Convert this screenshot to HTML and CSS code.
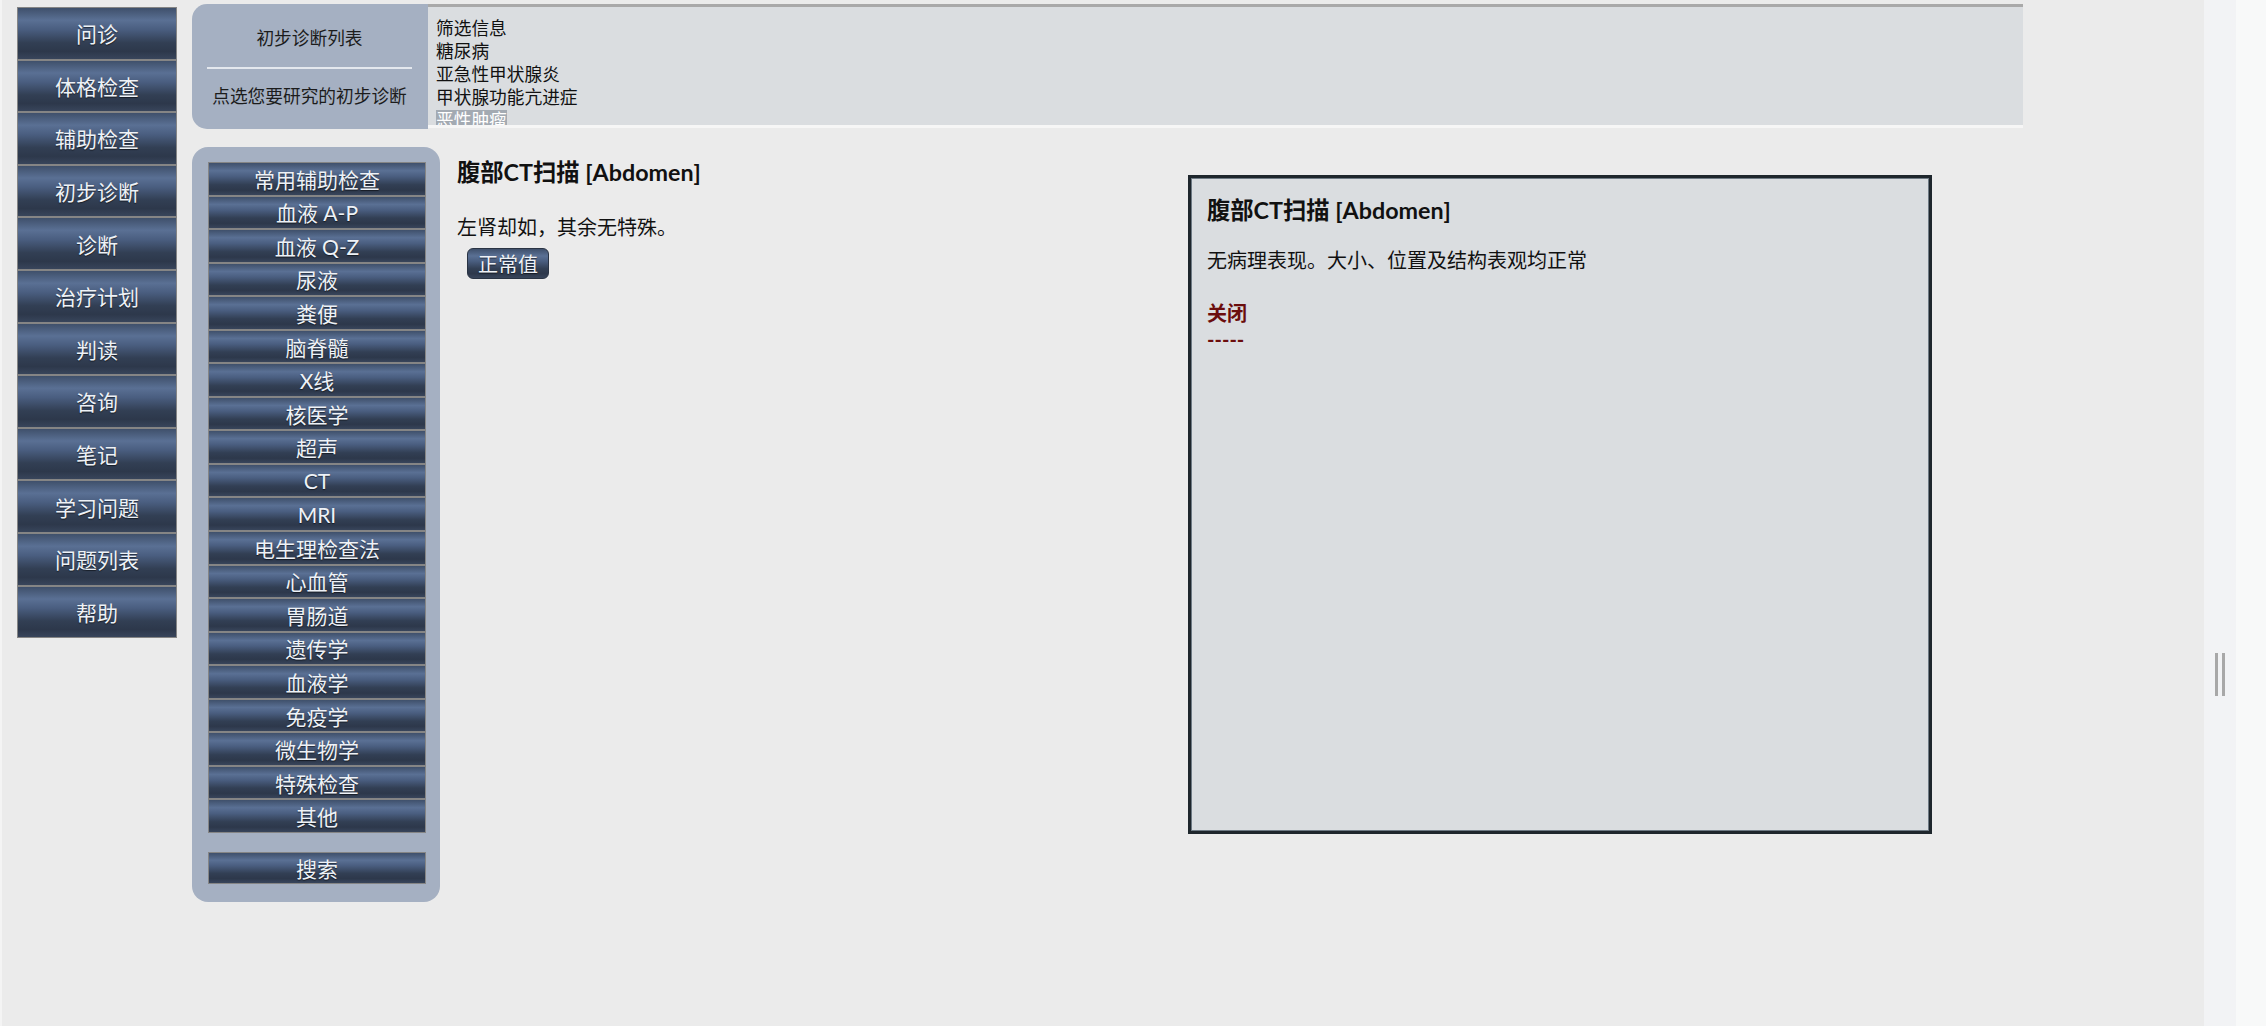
FILE: index.html
```html
<!DOCTYPE html>
<html lang="zh-CN">
<head>
    <meta charset="UTF-8">
    <meta name="viewport" content="width=device-width, initial-scale=1.0">
    <title>辅助检查</title>
    <link rel="stylesheet" href="styles.css">
</head>
<body>
    <div class="app">
        <div class="page">
            <nav class="main-nav">
                <a class="nav-btn">问诊</a>
                <a class="nav-btn">体格检查</a>
                <a class="nav-btn">辅助检查</a>
                <a class="nav-btn">初步诊断</a>
                <a class="nav-btn">诊断</a>
                <a class="nav-btn">治疗计划</a>
                <a class="nav-btn">判读</a>
                <a class="nav-btn">咨询</a>
                <a class="nav-btn">笔记</a>
                <a class="nav-btn">学习问题</a>
                <a class="nav-btn">问题列表</a>
                <a class="nav-btn">帮助</a>
            </nav>

            <div class="workspace">
                <div class="dx-bar">
                    <div class="dx-panel">
                        <div class="dx-title">初步诊断列表</div>
                        <div class="dx-hint">点选您要研究的初步诊断</div>
                    </div>
                    <div class="dx-list">
                        <div class="dx-item">筛选信息</div>
                        <div class="dx-item">糖尿病</div>
                        <div class="dx-item">亚急性甲状腺炎</div>
                        <div class="dx-item">甲状腺功能亢进症</div>
                        <div class="dx-item"><span class="selected">恶性肿瘤</span></div>
                    </div>
                </div>

                <div class="exam-area">
                    <div class="exam-panel">
                        <div class="exam-group">
                            <a class="exam-btn">常用辅助检查</a>
                            <a class="exam-btn">血液 A-P</a>
                            <a class="exam-btn">血液 Q-Z</a>
                            <a class="exam-btn">尿液</a>
                            <a class="exam-btn">粪便</a>
                            <a class="exam-btn">脑脊髓</a>
                            <a class="exam-btn">X线</a>
                            <a class="exam-btn">核医学</a>
                            <a class="exam-btn">超声</a>
                            <a class="exam-btn">CT</a>
                            <a class="exam-btn">MRI</a>
                            <a class="exam-btn">电生理检查法</a>
                            <a class="exam-btn">心血管</a>
                            <a class="exam-btn">胃肠道</a>
                            <a class="exam-btn">遗传学</a>
                            <a class="exam-btn">血液学</a>
                            <a class="exam-btn">免疫学</a>
                            <a class="exam-btn">微生物学</a>
                            <a class="exam-btn">特殊检查</a>
                            <a class="exam-btn">其他</a>
                        </div>
                        <a class="exam-btn search-btn">搜索</a>
                    </div>

                    <div class="result">
                        <h2 class="result-title">腹部CT扫描 [Abdomen]</h2>
                        <p class="result-text">左肾却如，其余无特殊。</p>
                        <button class="normal-btn">正常值</button>
                    </div>
                </div>
            </div>

            <!-- 正常值弹窗 -->
            <div class="popup">
                <h3 class="popup-title">腹部CT扫描 [Abdomen]</h3>
                <p class="popup-text">无病理表现。大小、位置及结构表观均正常</p>
                <a class="popup-close">关闭</a>
                <div class="popup-dash">-----</div>
            </div>
        </div>

        <div class="splitter"><span class="grip"></span></div>
        <div class="edge"></div>
    </div>
</body>
</html>
```

FILE: styles.css
```css
:root {
    --page-bg: #ebebeb;
    --panel-bg: #a5b0c2;
    --list-bg: #dadde0;
    --btn-border: #858585;
    --btn-text: #eef2f7;
    --text-color: #111;
    --close-color: #6b0d0d;
}

* {
    box-sizing: border-box;
    margin: 0;
    padding: 0;
}

body {
    font-family: Lato, "Noto Sans CJK SC", sans-serif;
    color: var(--text-color);
    background-color: var(--page-bg);
    overflow: hidden;
}

.app {
    display: flex;
    height: 100vh;
}

.page {
    flex: 1;
    position: relative;
    display: flex;
    align-items: flex-start;
    padding-top: 4px;
    background-color: var(--page-bg);
    border-left: 2px solid #f4f4f4;
}

/* boutons dégradés communs */
.nav-btn,
.exam-btn,
.normal-btn {
    display: flex;
    align-items: center;
    justify-content: center;
    color: var(--btn-text);
    text-shadow: 0 1px 1px rgba(0,0,0,0.55);
    background: linear-gradient(to bottom, #3f506b 0%, #5a7094 24%, #4a5e80 42%, #323f54 68%, #2d384b 85%, #38455b 100%);
    cursor: pointer;
    text-decoration: none;
}

.main-nav {
    display: flex;
    flex-direction: column;
    width: 160px;
    margin-left: 15px;
    margin-top: 3px;
}

.nav-btn {
    height: 52.6px;
    border: 1px solid var(--btn-border);
    font-size: 21px;
}

.workspace {
    width: 1831px;
    margin-left: 15px;
}

.dx-bar {
    display: flex;
    height: 125px;
}

.dx-panel {
    width: 236px;
    background-color: var(--panel-bg);
    border-radius: 15px 0 0 15px;
    padding: 0 16px 0 15px;
    font-size: 17.7px;
    line-height: 24px;
    text-align: center;
    color: #1c1c1c;
}

.dx-title {
    margin-top: 23px;
    padding-bottom: 16px;
    border-bottom: 2px solid #e4e8ee;
}

.dx-hint {
    margin-top: 16px;
}

.dx-list {
    flex: 1;
    height: 124px;
    background-color: var(--list-bg);
    border-top: 3px solid #a9a9a9;
    border-bottom: 3px solid #f6f6f6;
    padding: 10px 8px 0;
    overflow: hidden;
    font-size: 17.7px;
    line-height: 23.1px;
    color: #111;
}

.selected {
    background-color: #a3aab2;
    color: #fff;
}

.exam-area {
    display: flex;
    align-items: flex-start;
    margin-top: 18px;
}

.exam-panel {
    width: 248px;
    background-color: var(--panel-bg);
    border-radius: 16px;
    padding: 15px 14px 18px 16px;
}

.exam-group {
    display: flex;
    flex-direction: column;
}

.exam-btn {
    height: 33.55px;
    border: 1px solid var(--btn-border);
    font-size: 21px;
}

.search-btn {
    height: 32px;
    margin-top: 19px;
}

.result {
    margin-left: 17px;
}

.result-title {
    font-size: 23.3px;
    line-height: 28px;
    font-weight: bold;
    margin-top: 11px;
}

.result-text {
    font-size: 20px;
    line-height: 26px;
    margin-top: 28px;
}

.normal-btn {
    width: 82px;
    height: 31px;
    margin: 8px 0 0 10px;
    border: 1px solid #2a3444;
    border-radius: 6px;
    font-family: inherit;
    font-size: 20px;
}

.popup {
    position: absolute;
    left: 1186px;
    top: 175px;
    width: 744px;
    height: 659px;
    background-color: var(--list-bg);
    border: 3px solid #1e262c;
    box-shadow: inset 0 0 0 1px #6e7a84;
    padding: 18px 16px;
}

.popup-title {
    font-size: 23.3px;
    line-height: 28px;
    font-weight: bold;
}

.popup-text {
    font-size: 20px;
    line-height: 26px;
    margin-top: 23px;
}

.popup-close {
    display: block;
    margin-top: 27px;
    font-size: 20px;
    line-height: 26px;
    font-weight: bold;
    color: var(--close-color);
    cursor: pointer;
}

.popup-dash {
    font-size: 20px;
    line-height: 26px;
    font-weight: bold;
    color: var(--close-color);
}

.splitter {
    width: 32px;
    background-color: #f2f3f5;
    display: flex;
    justify-content: center;
    padding-top: 653px;
}

.grip {
    display: block;
    width: 10px;
    height: 43px;
    border-left: 3px solid #a8a8a8;
    border-right: 3px solid #a8a8a8;
}

.edge {
    width: 30px;
    background-color: #f8f9f9;
}
```
